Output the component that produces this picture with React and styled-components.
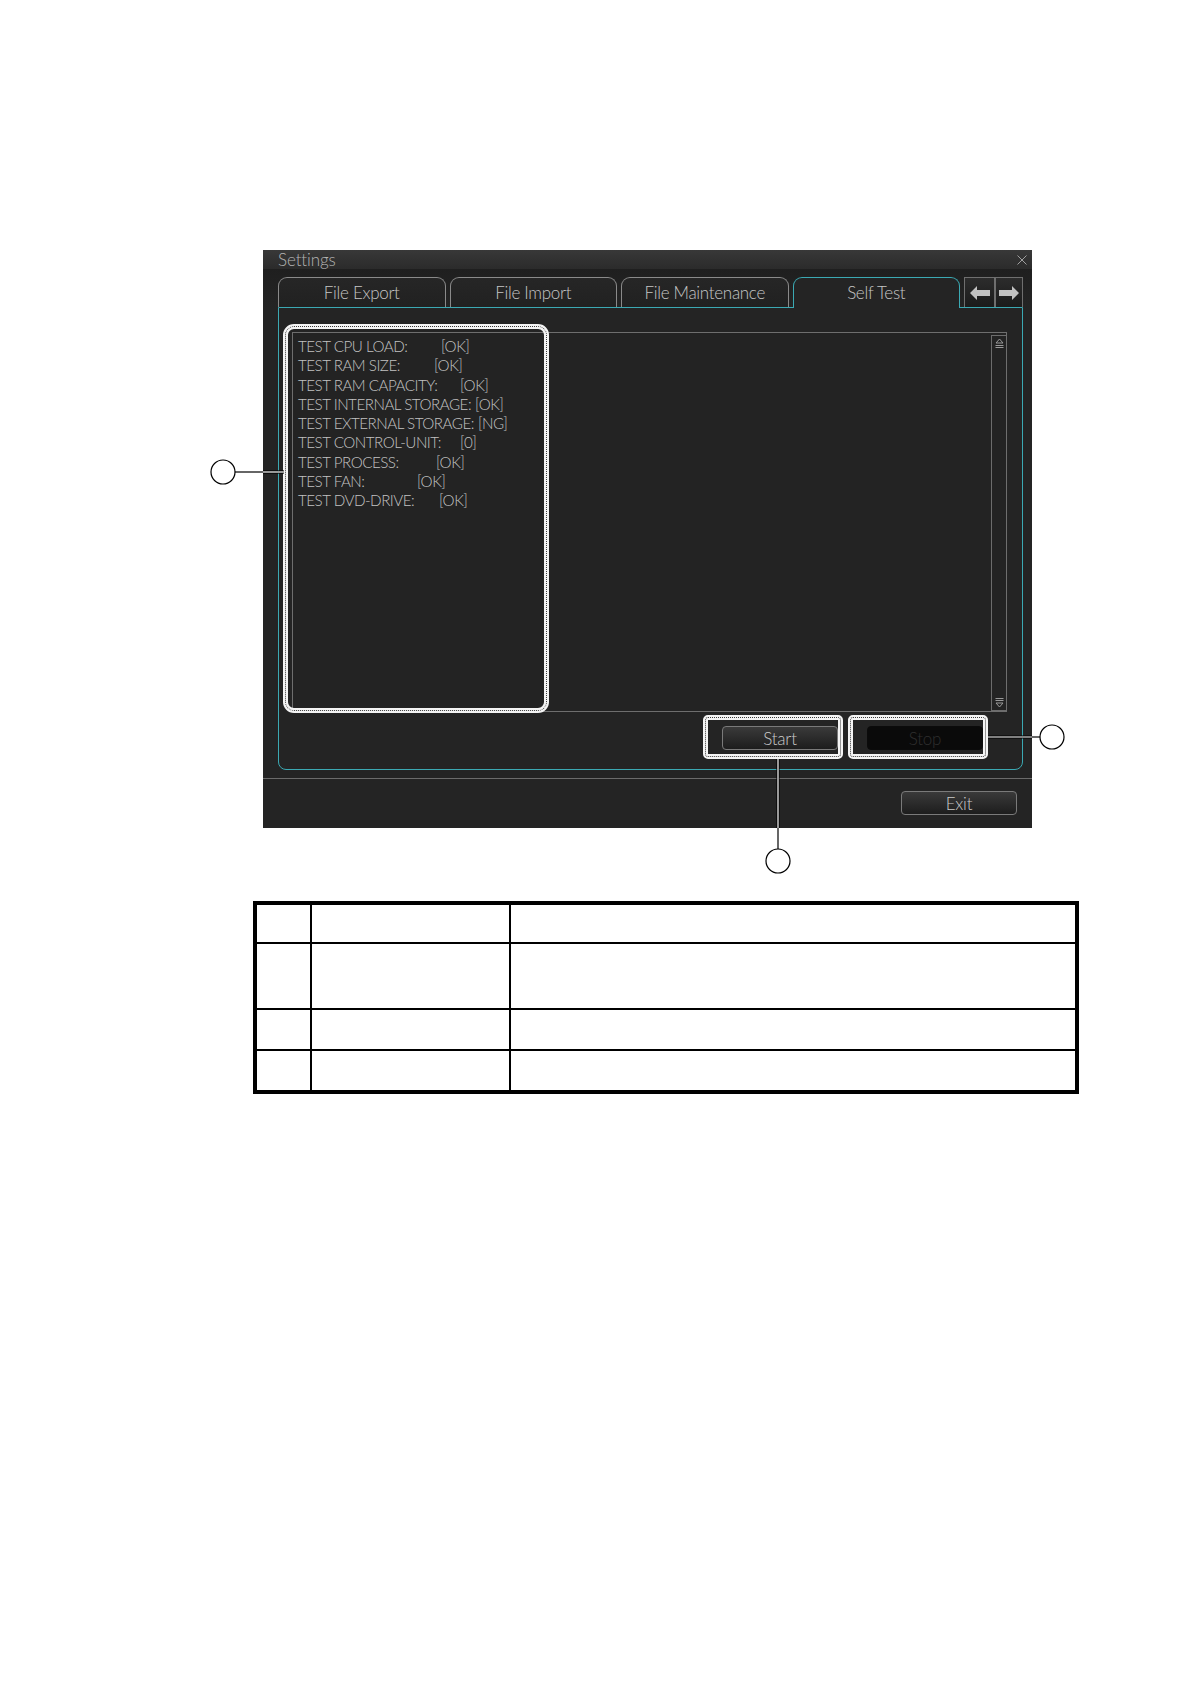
import React from "react";
import styled, { createGlobalStyle } from "styled-components";

const GlobalStyle = createGlobalStyle`
  html, body { margin: 0; padding: 0; background: #ffffff; }
  body { font-family: Lato, "Open Sans", "DejaVu Sans", sans-serif; }
  * { box-sizing: border-box; }
`;

const CYAN = "#3ba9b3";
const GREY = "#8a8a8a";

const Page = styled.div`
  position: relative;
  width: 1190px;
  height: 1684px;
  background: #ffffff;
  display: flex;
  flex-direction: column;
  align-items: flex-start;
  padding-top: 250px;
`;

const Window = styled.div`
  margin-left: 263px;
  width: 769px;
  height: 578px;
  background: #242424;
  display: flex;
  flex-direction: column;
`;

const TitleBar = styled.div`
  height: 19px;
  background: linear-gradient(#383838, #2b2b2b);
  display: flex;
  align-items: center;
  justify-content: space-between;
  padding: 0 5px 0 15px;
`;

const Title = styled.span`
  color: #b4b4b4;
  font-size: 17px;
  font-weight: 300;
  line-height: 19px;
  letter-spacing: -0.1px;
`;

const Body = styled.div`
  display: flex;
  flex-direction: column;
  padding: 8px 9px 0 15px;
  background: linear-gradient(#1f1f1f 0px, #232323 30px, #242424 40px);
`;

const TabRow = styled.div`
  display: flex;
  align-items: flex-end;
  gap: 4px;
  height: 30px;
`;

const Tab = styled.div`
  position: relative;
  z-index: 1;
  width: 168px;
  height: ${(p) => (p.$active ? "31px" : "30px")};
  margin-bottom: ${(p) => (p.$active ? "-1px" : "0")};
  border: 1px solid ${(p) => (p.$active ? CYAN : GREY)};
  border-bottom: none;
  border-radius: 9px 9px 0 0;
  background: ${(p) => (p.$active ? "#242424" : "linear-gradient(#262626, #212121)")};
  color: #c6c6c6;
  font-size: 17px;
  font-weight: 300;
  letter-spacing: -0.3px;
  display: flex;
  align-items: center;
  justify-content: center;
  padding-bottom: ${(p) => (p.$active ? "1px" : "0")};
`;

const ArrowGroup = styled.div`
  display: flex;
  height: 30px;
`;

const ArrowBtn = styled.div`
  width: ${(p) => p.$w}px;
  height: 30px;
  border: 1px solid #6f6f6f;
  border-bottom: none;
  background: linear-gradient(#2c2c2c, #1b1b1b);
  display: flex;
  align-items: center;
  justify-content: center;
`;

const Panel = styled.div`
  width: 745px;
  height: 463px;
  border: 1px solid ${CYAN};
  border-radius: 0 0 8px 8px;
  background: #242424;
  padding: 24px 15px 19px 13px;
  display: flex;
  flex-direction: column;
  gap: 14px;
`;

const ListBox = styled.div`
  position: relative;
  height: 380px;
  border: 1px solid #6e6e6e;
  background: #232323;
  display: flex;
`;

const ListContent = styled.div`
  flex: 1;
  padding: 4px 0 0 5px;
`;

const Row = styled.div`
  display: flex;
  color: #c2c2c2;
  font-size: 15.2px;
  font-weight: 300;
  letter-spacing: -0.5px;
  line-height: 19.3px;
  white-space: nowrap;
`;

const Label = styled.span`
  min-width: ${(p) => p.$w}px;
  padding-right: 4px;
`;

const Scrollbar = styled.div`
  width: 15px;
  margin-top: 2px;
  border: 1px solid #6c6c6c;
  border-right: none;
  display: flex;
  flex-direction: column;
  justify-content: space-between;
  align-items: center;
  padding: 2px 0;
`;

const Highlight = styled.div`
  position: absolute;
  left: ${(p) => p.$l}px;
  top: ${(p) => p.$t}px;
  bottom: ${(p) => p.$b}px;
  ${(p) => (p.$w ? `width: ${p.$w}px;` : `right: ${p.$r}px;`)}
  border: 5px solid #f4f4f4;
  border-radius: ${(p) => p.$rad}px;
  pointer-events: none;
  &::after {
    content: "";
    position: absolute;
    inset: -3px;
    border: 1px dotted #3a3a3a;
    border-radius: ${(p) => p.$rad - 2}px;
  }
`;

const ButtonRow = styled.div`
  display: flex;
  justify-content: flex-end;
  gap: 29px;
  padding-right: 24px;
`;

const ButtonWrap = styled.div`
  position: relative;
`;

const Button = styled.div`
  width: 116px;
  height: 24px;
  border-radius: 4px;
  display: flex;
  align-items: center;
  justify-content: center;
  font-size: 17px;
  font-weight: 300;
  letter-spacing: -0.2px;
  color: ${(p) => (p.$disabled ? "#2f2f2f" : "#cacaca")};
  border: 1px solid ${(p) => (p.$disabled ? "#0b0b0b" : "#7a7a7a")};
  background: ${(p) =>
    p.$disabled ? "#0a0a0a" : "linear-gradient(#3a3a3a, #1d1d1d)"};
`;

const Separator = styled.div`
  margin-top: 8px;
  height: 1px;
  background: #6b6b6b;
`;

const Footer = styled.div`
  display: flex;
  justify-content: flex-end;
  padding: 12px 15px 0 0;
`;

const Overlay = styled.svg`
  position: absolute;
  left: 0;
  top: 0;
  pointer-events: none;
`;

const Table = styled.div`
  margin-top: 73px;
  margin-left: 253px;
  width: 826px;
  border: 4px solid #000;
  display: grid;
  grid-template-columns: 55px 199px 1fr;
  grid-template-rows: 39px 66px 41px 39px;
`;

const Cell = styled.div`
  border-right: ${(p) => (p.$last ? "none" : "2px solid #000")};
  border-bottom: ${(p) => (p.$bottom ? "none" : "2px solid #000")};
`;

const rows = [
  { l: "TEST CPU LOAD:", v: "[OK]", w: 143 },
  { l: "TEST RAM SIZE:", v: "[OK]", w: 136 },
  { l: "TEST RAM CAPACITY:", v: "[OK]", w: 162 },
  { l: "TEST INTERNAL STORAGE:", v: "[OK]", w: 0 },
  { l: "TEST EXTERNAL STORAGE:", v: "[NG]", w: 0 },
  { l: "TEST CONTROL-UNIT:", v: "[0]", w: 162 },
  { l: "TEST PROCESS:", v: "[OK]", w: 138 },
  { l: "TEST FAN:", v: "[OK]", w: 119 },
  { l: "TEST DVD-DRIVE:", v: "[OK]", w: 141 },
];

const CloseIcon = () => (
  <svg width="10" height="10" viewBox="0 0 10 10">
    <path d="M0.5 0.5 L9.5 9.5 M9.5 0.5 L0.5 9.5" stroke="#a0a0a0" strokeWidth="1" />
  </svg>
);

const ArrowIcon = ({ dir }) => (
  <svg width="20" height="14" viewBox="0 0 20 14">
    <polygon
      points="0,7 7,0 7,4 20,4 20,10 7,10 7,14"
      fill="#c2c2c2"
      transform={dir === "right" ? "translate(20,0) scale(-1,1)" : undefined}
    />
  </svg>
);

const ScrollIcon = ({ down }) => (
  <svg width="11" height="11" viewBox="0 0 11 11">
    <g transform={down ? "translate(0,11) scale(1,-1)" : undefined} stroke="#9a9a9a" strokeWidth="1" fill="none">
      <path d="M5.5 1 L9 5 L2 5 Z" />
      <path d="M1.5 7.5 H9.5 M1.5 9.5 H9.5" />
    </g>
  </svg>
);

const Callouts = () => (
  <Overlay width="1190" height="1684" viewBox="0 0 1190 1684">
    <line x1="235" y1="472" x2="263" y2="472" stroke="#000" strokeWidth="1.2" />
    <line x1="263" y1="472" x2="284" y2="472" stroke="#000" strokeWidth="3.2" />
    <line x1="263" y1="472" x2="284" y2="472" stroke="#fff" strokeWidth="1.2" />
    <circle cx="223" cy="472" r="12" fill="#fff" stroke="#000" strokeWidth="1.2" />
    <line x1="988" y1="737" x2="1032" y2="737" stroke="#000" strokeWidth="3.2" />
    <line x1="988" y1="737" x2="1032" y2="737" stroke="#fff" strokeWidth="1.2" />
    <line x1="1032" y1="737" x2="1040" y2="737" stroke="#000" strokeWidth="1.2" />
    <circle cx="1052" cy="737" r="12" fill="#fff" stroke="#000" strokeWidth="1.2" />
    <line x1="778" y1="759" x2="778" y2="828" stroke="#000" strokeWidth="3.2" />
    <line x1="778" y1="759" x2="778" y2="828" stroke="#fff" strokeWidth="1.2" />
    <line x1="778" y1="828" x2="778" y2="849" stroke="#000" strokeWidth="1.2" />
    <circle cx="778" cy="861" r="12" fill="#fff" stroke="#000" strokeWidth="1.2" />
  </Overlay>
);

export default function App() {
  const tabs = ["File Export", "File Import", "File Maintenance", "Self Test"];
  return (
    <>
      <GlobalStyle />
      <Page>
        <Window>
          <TitleBar>
            <Title>Settings</Title>
            <CloseIcon />
          </TitleBar>
          <Body>
            <TabRow>
              {tabs.map((t) => (
                <Tab key={t} $active={t === "Self Test"}>
                  {t}
                </Tab>
              ))}
              <ArrowGroup>
                <ArrowBtn $w={31}>
                  <ArrowIcon dir="left" />
                </ArrowBtn>
                <ArrowBtn $w={28}>
                  <ArrowIcon dir="right" />
                </ArrowBtn>
              </ArrowGroup>
            </TabRow>
            <Panel>
              <ListBox>
                <ListContent>
                  {rows.map((r) => (
                    <Row key={r.l}>
                      <Label $w={r.w}>{r.l}</Label>
                      <span>{r.v}</span>
                    </Row>
                  ))}
                </ListContent>
                <Scrollbar>
                  <ScrollIcon />
                  <ScrollIcon down />
                </Scrollbar>
                <Highlight $l={-10} $t={-9} $b={-2} $w={266} $rad={11} />
              </ListBox>
              <ButtonRow>
                <ButtonWrap>
                  <Button>Start</Button>
                  <Highlight $l={-19} $t={-11} $b={-9} $r={-5} $rad={5} />
                </ButtonWrap>
                <ButtonWrap>
                  <Button $disabled>Stop</Button>
                  <Highlight $l={-19} $t={-11} $b={-9} $r={-5} $rad={5} />
                </ButtonWrap>
              </ButtonRow>
            </Panel>
          </Body>
          <Separator />
          <Footer>
            <Button>Exit</Button>
          </Footer>
        </Window>
        <Table>
          {Array.from({ length: 12 }).map((_, i) => (
            <Cell key={i} $last={i % 3 === 2} $bottom={i >= 9} />
          ))}
        </Table>
        <Callouts />
      </Page>
    </>
  );
}
